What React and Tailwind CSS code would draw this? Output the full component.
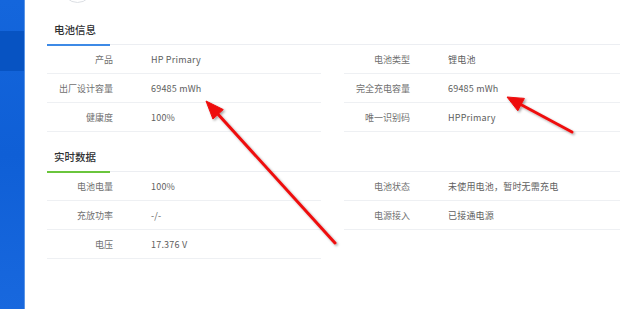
import React from 'react';

const batteryInfo = [
  [['产品', 'HP Primary'], ['出厂设计容量', '69485 mWh'], ['健康度', '100%']],
  [['电池类型', '锂电池'], ['完全充电容量', '69485 mWh'], ['唯一识别码', 'HPPrimary']],
];

const liveData = [
  [['电池电量', '100%'], ['充放功率', '-/-'], ['电压', '17.376 V']],
  [['电池状态', '未使用电池，暂时无需充电'], ['电源接入', '已接通电源']],
];

/* ─────────── ROW ─────────── */
function InfoRow({ label, value }) {
  return (
    <div className="flex items-center h-[29px] pt-[2px] border-b border-[#eef0f3]">
      <div className="w-[66px] text-right text-[#707070] shrink-0">{label}</div>
      <div className="ml-[38px] text-[#5e5e5e] whitespace-nowrap tracking-[0.2px]">{value}</div>
    </div>
  );
}

/* ─────────── SECTION ─────────── */
function Section({ title, accent, columns }) {
  return (
    <div>
      <div className="relative h-[40px] border-b border-[#eceef2] flex items-end">
        <div className="pl-[7px] pb-[6px] text-[10.5px] font-medium text-[#303133]">{title}</div>
        <div className={`absolute left-0 bottom-[-1.5px] w-[63px] h-[2px] ${accent}`} />
      </div>
      <div className="grid grid-cols-[274px_1fr] gap-x-[23px]">
        {columns.map((col, ci) => (
          <div key={ci}>
            {col.map(([label, value]) => (
              <InfoRow key={label} label={label} value={value} />
            ))}
          </div>
        ))}
      </div>
    </div>
  );
}

/* ─────────── ARROWS ─────────── */
function Arrows() {
  return (
    <svg className="absolute inset-0 pointer-events-none" width="620" height="309" viewBox="0 0 620 309">
      <defs>
        <filter id="sh" x="-20%" y="-20%" width="140%" height="140%">
          <feDropShadow dx="1.5" dy="1.5" stdDeviation="1.2" floodColor="#000" floodOpacity="0.35" />
        </filter>
      </defs>
      <g fill="#ee1111" stroke="#ee1111" filter="url(#sh)">
        <line x1="335" y1="243" x2="216" y2="112" strokeWidth="3" strokeLinecap="round" />
        <polygon points="206,101 223.3,109.6 212.9,119" strokeWidth="1" strokeLinejoin="round" />
        <line x1="572" y1="132" x2="518" y2="103" strokeWidth="3" strokeLinecap="round" />
        <polygon points="507,97 524.4,98.4 517.8,110.8" strokeWidth="1" strokeLinejoin="round" />
      </g>
    </svg>
  );
}

export default function App() {
  return (
    <div
      className="relative w-[620px] h-[309px] overflow-hidden bg-white flex text-[9px]"
      style={{ fontFamily: '"Noto Sans CJK SC", "Noto Sans", sans-serif' }}
    >
      <div className="w-[24px] shrink-0 bg-gradient-to-b from-[#1466dc] via-[#0f5fd6] to-[#1868de] flex flex-col">
        <div className="h-[31px]" />
        <div className="h-[40px] bg-[#0753c2]" />
      </div>
      <div className="w-[1px] bg-[#5b95e6]" />
      <div className="flex-1 pl-[22px] relative">
        <div className="absolute left-[37px] top-[-28px] w-[31px] h-[31px] rounded-full border border-[#dcdfe4]" />
        <div className="pt-[5px]">
          <Section title="电池信息" accent="bg-[#3d8ae6]" columns={batteryInfo} />
          <Section title="实时数据" accent="bg-[#6ac53c]" columns={liveData} />
        </div>
      </div>
      <Arrows />
    </div>
  );
}
